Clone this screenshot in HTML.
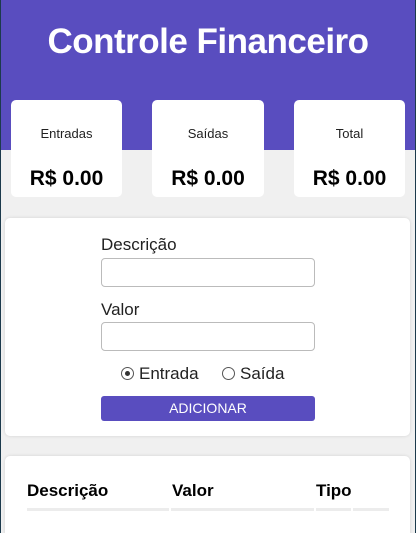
<!DOCTYPE html>
<html><head><meta charset="utf-8"><style>
*{margin:0;padding:0;box-sizing:border-box}
html,body{width:416px;height:533px;overflow:hidden}
body{background:#f0f0f0;font-family:"Liberation Sans",sans-serif;position:relative}
.edge{position:absolute;top:0;width:1px;height:533px;background:#1c3a4c;z-index:5}
.hdr{position:absolute;left:0;top:0;width:416px;height:150px;background:#594dbf}
h1{position:absolute;top:22px;left:0;width:416px;text-align:center;color:#fff;font-size:35px;font-weight:bold;letter-spacing:-0.5px}
.c{position:absolute;top:100px;height:97px;background:#fff;border-radius:5px;text-align:center}
.c .l{position:absolute;top:26px;width:100%;font-size:13px;color:#222}
.c .v{position:absolute;top:67px;width:100%;font-size:21px;font-weight:bold;color:#000}
.box{position:absolute;left:5px;width:405px;background:#fff;border-radius:5px;box-shadow:0 0 3px rgba(0,0,0,.12)}
.lab{position:absolute;left:101px;font-size:17px;color:#222}
.inp{position:absolute;left:101px;width:214px;height:29px;border:1px solid #bbb;border-radius:4px;background:#fff}
.rad{position:absolute;width:13px;height:13px;border:1px solid #555;border-radius:50%}
.btn{position:absolute;left:101px;top:396px;width:214px;height:25px;background:#594dbf;border-radius:3px;color:#fff;font-size:14px;text-align:center;line-height:25px}
.th{position:absolute;top:481px;font-size:17px;font-weight:bold;color:#000}
.ln{position:absolute;top:508px;height:3px;background:#ececec}
</style></head><body>
<div class="edge" style="left:0"></div><div class="edge" style="left:415px"></div>
<div class="hdr"></div>
<h1>Controle Financeiro</h1>
<div class="c" style="left:11px;width:111px"><div class="l">Entradas</div><div class="v">R$ 0.00</div></div>
<div class="c" style="left:152px;width:112px"><div class="l">Saídas</div><div class="v">R$ 0.00</div></div>
<div class="c" style="left:294px;width:111px"><div class="l">Total</div><div class="v">R$ 0.00</div></div>
<div class="box" style="top:218px;height:218px"></div>
<div class="lab" style="top:235px">Descrição</div>
<div class="inp" style="top:258px"></div>
<div class="lab" style="top:300px">Valor</div>
<div class="inp" style="top:322px"></div>
<div class="rad" style="left:121px;top:367px"><div style="position:absolute;left:3px;top:3px;width:5px;height:5px;border-radius:50%;background:#333"></div></div>
<div class="lab" style="left:139px;top:364px">Entrada</div>
<div class="rad" style="left:222px;top:367px"></div>
<div class="lab" style="left:240px;top:364px">Saída</div>
<div class="btn">ADICIONAR</div>
<div class="box" style="top:456px;height:90px"></div>
<div class="th" style="left:27px">Descrição</div>
<div class="th" style="left:172px">Valor</div>
<div class="th" style="left:316px">Tipo</div>
<div class="ln" style="left:27px;width:142px"></div>
<div class="ln" style="left:171px;width:143px"></div>
<div class="ln" style="left:316px;width:35px"></div>
<div class="ln" style="left:353px;width:36px"></div>
</body></html>
